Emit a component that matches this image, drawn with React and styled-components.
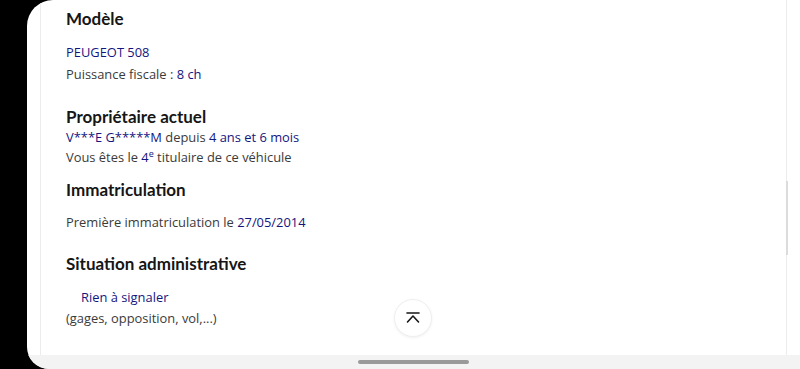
import React from 'react';
import styled, { createGlobalStyle } from 'styled-components';

const GlobalStyle = createGlobalStyle`
  html, body {
    margin: 0;
    padding: 0;
    background: #000;
  }
  body {
    font-family: 'Open Sans', 'Noto Sans', sans-serif;
    -webkit-font-smoothing: antialiased;
  }
`;

const Page = styled.div`
  width: 800px;
  height: 369px;
  background: #000;
  display: flex;
  overflow: hidden;
`;

const Screen = styled.div`
  position: relative;
  margin-left: 27px;
  flex: 1;
  display: flex;
  flex-direction: column;
  background: #fff;
  border-top-left-radius: 26px;
  border-bottom-left-radius: 22px;
  overflow: hidden;
`;

const Scroller = styled.div`
  flex: 1;
  display: flex;
  margin: 0 13px 0 13px;
  border-left: 1px solid #ececec;
  border-right: 1px solid #ececec;
  position: relative;
`;

const ScrollThumb = styled.div`
  position: absolute;
  right: -2px;
  top: 181px;
  width: 2px;
  height: 74px;
  background: #dcdcdc;
`;

const Content = styled.div`
  flex: 1;
  padding: 9px 0 0 25px;
  display: flex;
  flex-direction: column;
`;

const Section = styled.section`
  display: flex;
  flex-direction: column;
  margin-bottom: ${p => p.$after || 0}px;
`;

const Title = styled.h2`
  margin: 0 0 ${p => p.$gap || 0}px;
  font-family: 'Lato', 'Noto Sans', sans-serif;
  font-size: 17px;
  line-height: 20px;
  font-weight: 700;
  color: #161616;
`;

const Line = styled.p`
  margin: 0;
  font-size: 12.9px;
  line-height: ${p => p.$lh || 21}px;
  color: #3a3a3a;
  padding-left: ${p => p.$indent || 0}px;
`;

const Value = styled.span`
  color: #15157f;
`;

const Sup = styled.sup`
  font-size: 9px;
  line-height: 0;
  color: #15157f;
  vertical-align: 5px;
`;

const NavBar = styled.div`
  height: 14px;
  background: #f3f3f3;
  display: flex;
  align-items: center;
  justify-content: center;
`;

const Handle = styled.div`
  width: 111px;
  height: 4px;
  border-radius: 2px;
  background: #9a9a9a;
`;

const TopButton = styled.button`
  position: absolute;
  left: 367px;
  top: 299px;
  width: 38px;
  height: 38px;
  border-radius: 50%;
  border: 1px solid #efefef;
  background: #fff;
  box-shadow: 0 1px 3px rgba(0, 0, 0, 0.06);
  display: flex;
  align-items: center;
  justify-content: center;
  padding: 0;
`;

const ToTopIcon = () => (
  <svg width="16" height="14" viewBox="0 0 16 14" fill="none" stroke="#161616" strokeWidth="1.6" strokeLinecap="round" strokeLinejoin="round">
    <path d="M2 2h12" />
    <path d="M2.5 11l5.5-6 5.5 6" />
  </svg>
);

const App = () => (
  <>
    <GlobalStyle />
    <Page>
      <Screen>
        <Scroller>
          <ScrollThumb />
          <Content>
            <Section $after={22}>
              <Title $gap={12}>Modèle</Title>
              <Line $lh={22}><Value>PEUGEOT 508</Value></Line>
              <Line $lh={22}>Puissance fiscale : <Value>8 ch</Value></Line>
            </Section>
            <Section $after={13}>
              <Title>Propriétaire actuel</Title>
              <Line $lh={20}><Value>V***E G*****M</Value> depuis <Value>4 ans et 6 mois</Value></Line>
              <Line $lh={20}>Vous êtes le <Value>4</Value><Sup>e</Sup> titulaire de ce véhicule</Line>
            </Section>
            <Section $after={21}>
              <Title $gap={12}>Immatriculation</Title>
              <Line>Première immatriculation le <Value>27/05/2014</Value></Line>
            </Section>
            <Section>
              <Title $gap={13}>Situation administrative</Title>
              <Line $indent={15}><Value>Rien à signaler</Value></Line>
              <Line>(gages, opposition, vol,...)</Line>
            </Section>
          </Content>
        </Scroller>
        <NavBar>
          <Handle />
        </NavBar>
        <TopButton aria-label="Haut de page">
          <ToTopIcon />
        </TopButton>
      </Screen>
    </Page>
  </>
);

export default App;
